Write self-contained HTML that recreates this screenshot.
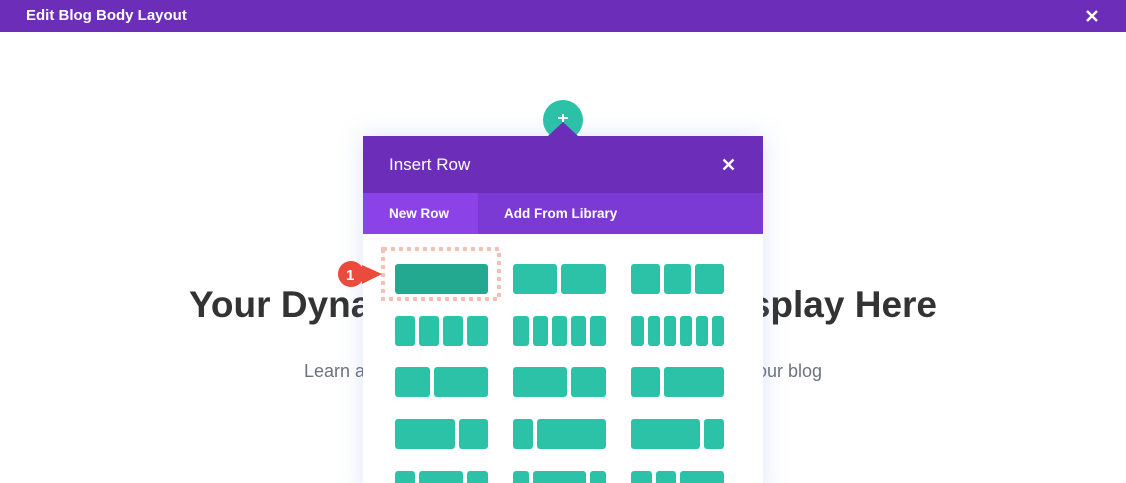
<!DOCTYPE html>
<html><head><meta charset="utf-8"><style>
*{margin:0;padding:0;box-sizing:border-box}
html,body{width:1126px;height:483px;overflow:hidden}
body{background:#fff;font-family:"Liberation Sans",sans-serif;position:relative}
.top{position:absolute;left:0;top:0;width:1126px;height:32px;background:#6c2eb9;color:#fff;font-size:15px;font-weight:bold;line-height:32px;padding-left:26px}
.ab{position:absolute}
.h1{font-size:37px;font-weight:bold;color:#333;top:284px;white-space:nowrap}
.sub{font-size:18px;color:#6b7280;top:361px;white-space:nowrap}
.modal{position:absolute;left:363px;top:136px;width:400px;height:360px;background:#fff;box-shadow:0 0 22px rgba(120,150,220,.25)}
.mh{height:57px;background:#6c2eb9;color:#fff;font-size:17px;line-height:57px;padding-left:26px;position:relative}
.tabs{height:41px;background:#7b3ad3;display:flex;color:#fff;font-size:13.5px;font-weight:bold;line-height:41px}
.b{position:absolute;height:30px;background:#2bc2a7;border-radius:3px}
</style></head><body>
<div class="top">Edit Blog Body Layout</div>
<svg class="ab" style="left:1085px;top:9px" width="14" height="14"><path d="M2 2L12 12M12 2L2 12" stroke="#fff" stroke-width="2.4"/></svg>
<div class="ab h1" style="left:189px">Your Dyna</div>
<div class="ab h1" style="right:189px">splay Here</div>
<div class="ab sub" style="left:304px">Learn al</div>
<div class="ab sub" style="right:304px">our blog</div>
<div class="ab" style="left:543px;top:100px;width:40px;height:40px;border-radius:50%;background:#2bc2a7"></div>
<div class="ab" style="left:558px;top:117px;width:10px;height:2px;background:#fff"></div>
<div class="ab" style="left:562px;top:114px;width:2px;height:8px;background:#fff"></div>
<div class="modal">
<div class="ab" style="left:185px;top:-14px;width:0;height:0;border-left:15px solid transparent;border-right:15px solid transparent;border-bottom:14px solid #6c2eb9"></div>
<div class="mh">Insert Row<svg class="ab" style="right:28px;top:22px" width="13" height="13"><path d="M1.5 1.5L11.5 11.5M11.5 1.5L1.5 11.5" stroke="#fff" stroke-width="2.4"/></svg></div>
<div class="tabs"><div style="width:115px;background:#8b43e8;padding-left:26px">New Row</div><div style="padding-left:26px">Add From Library</div></div>
</div>
<svg class="ab" style="left:380px;top:246px" width="122" height="56"><rect x="3" y="3" width="116" height="50" fill="none" stroke="#f9bfb7" stroke-width="4" stroke-dasharray="4 4"/></svg>
<!-- row1 -->
<div class="b" style="left:395px;top:264px;width:93px;background:#24a991"></div>
<div class="b" style="left:513px;top:264px;width:44px"></div><div class="b" style="left:561px;top:264px;width:45px"></div>
<div class="b" style="left:631px;top:264px;width:29px"></div><div class="b" style="left:664px;top:264px;width:27px"></div><div class="b" style="left:695px;top:264px;width:29px"></div>
<!-- row2 -->
<div class="b" style="left:395px;top:316px;width:20px"></div><div class="b" style="left:419px;top:316px;width:20px"></div><div class="b" style="left:443px;top:316px;width:20px"></div><div class="b" style="left:467px;top:316px;width:21px"></div>
<div class="b" style="left:513px;top:316px;width:16px"></div><div class="b" style="left:533px;top:316px;width:15px"></div><div class="b" style="left:552px;top:316px;width:15px"></div><div class="b" style="left:571px;top:316px;width:15px"></div><div class="b" style="left:590px;top:316px;width:16px"></div>
<div class="b" style="left:631px;top:316px;width:13px"></div><div class="b" style="left:648px;top:316px;width:12px"></div><div class="b" style="left:664px;top:316px;width:12px"></div><div class="b" style="left:680px;top:316px;width:12px"></div><div class="b" style="left:696px;top:316px;width:12px"></div><div class="b" style="left:712px;top:316px;width:12px"></div>
<!-- row3 -->
<div class="b" style="left:395px;top:367px;width:35px"></div><div class="b" style="left:434px;top:367px;width:54px"></div>
<div class="b" style="left:513px;top:367px;width:54px"></div><div class="b" style="left:571px;top:367px;width:35px"></div>
<div class="b" style="left:631px;top:367px;width:29px"></div><div class="b" style="left:664px;top:367px;width:60px"></div>
<!-- row4 -->
<div class="b" style="left:395px;top:419px;width:60px"></div><div class="b" style="left:459px;top:419px;width:29px"></div>
<div class="b" style="left:513px;top:419px;width:20px"></div><div class="b" style="left:537px;top:419px;width:69px"></div>
<div class="b" style="left:631px;top:419px;width:69px"></div><div class="b" style="left:704px;top:419px;width:20px"></div>
<!-- row5 -->
<div class="b" style="left:395px;top:471px;width:20px"></div><div class="b" style="left:419px;top:471px;width:44px"></div><div class="b" style="left:467px;top:471px;width:21px"></div>
<div class="b" style="left:513px;top:471px;width:16px"></div><div class="b" style="left:533px;top:471px;width:53px"></div><div class="b" style="left:590px;top:471px;width:16px"></div>
<div class="b" style="left:631px;top:471px;width:21px"></div><div class="b" style="left:656px;top:471px;width:20px"></div><div class="b" style="left:680px;top:471px;width:44px"></div>
<!-- badge -->
<svg class="ab" style="left:334px;top:258px" width="52" height="34"><path d="M28 7 L48 16 L28 26 Z" fill="#ea4b3c"/><circle cx="17" cy="16" r="13" fill="#ea4b3c"/><text x="12" y="22" font-family="Liberation Sans" font-weight="bold" font-size="15" fill="#fff">1</text></svg>
</body></html>
